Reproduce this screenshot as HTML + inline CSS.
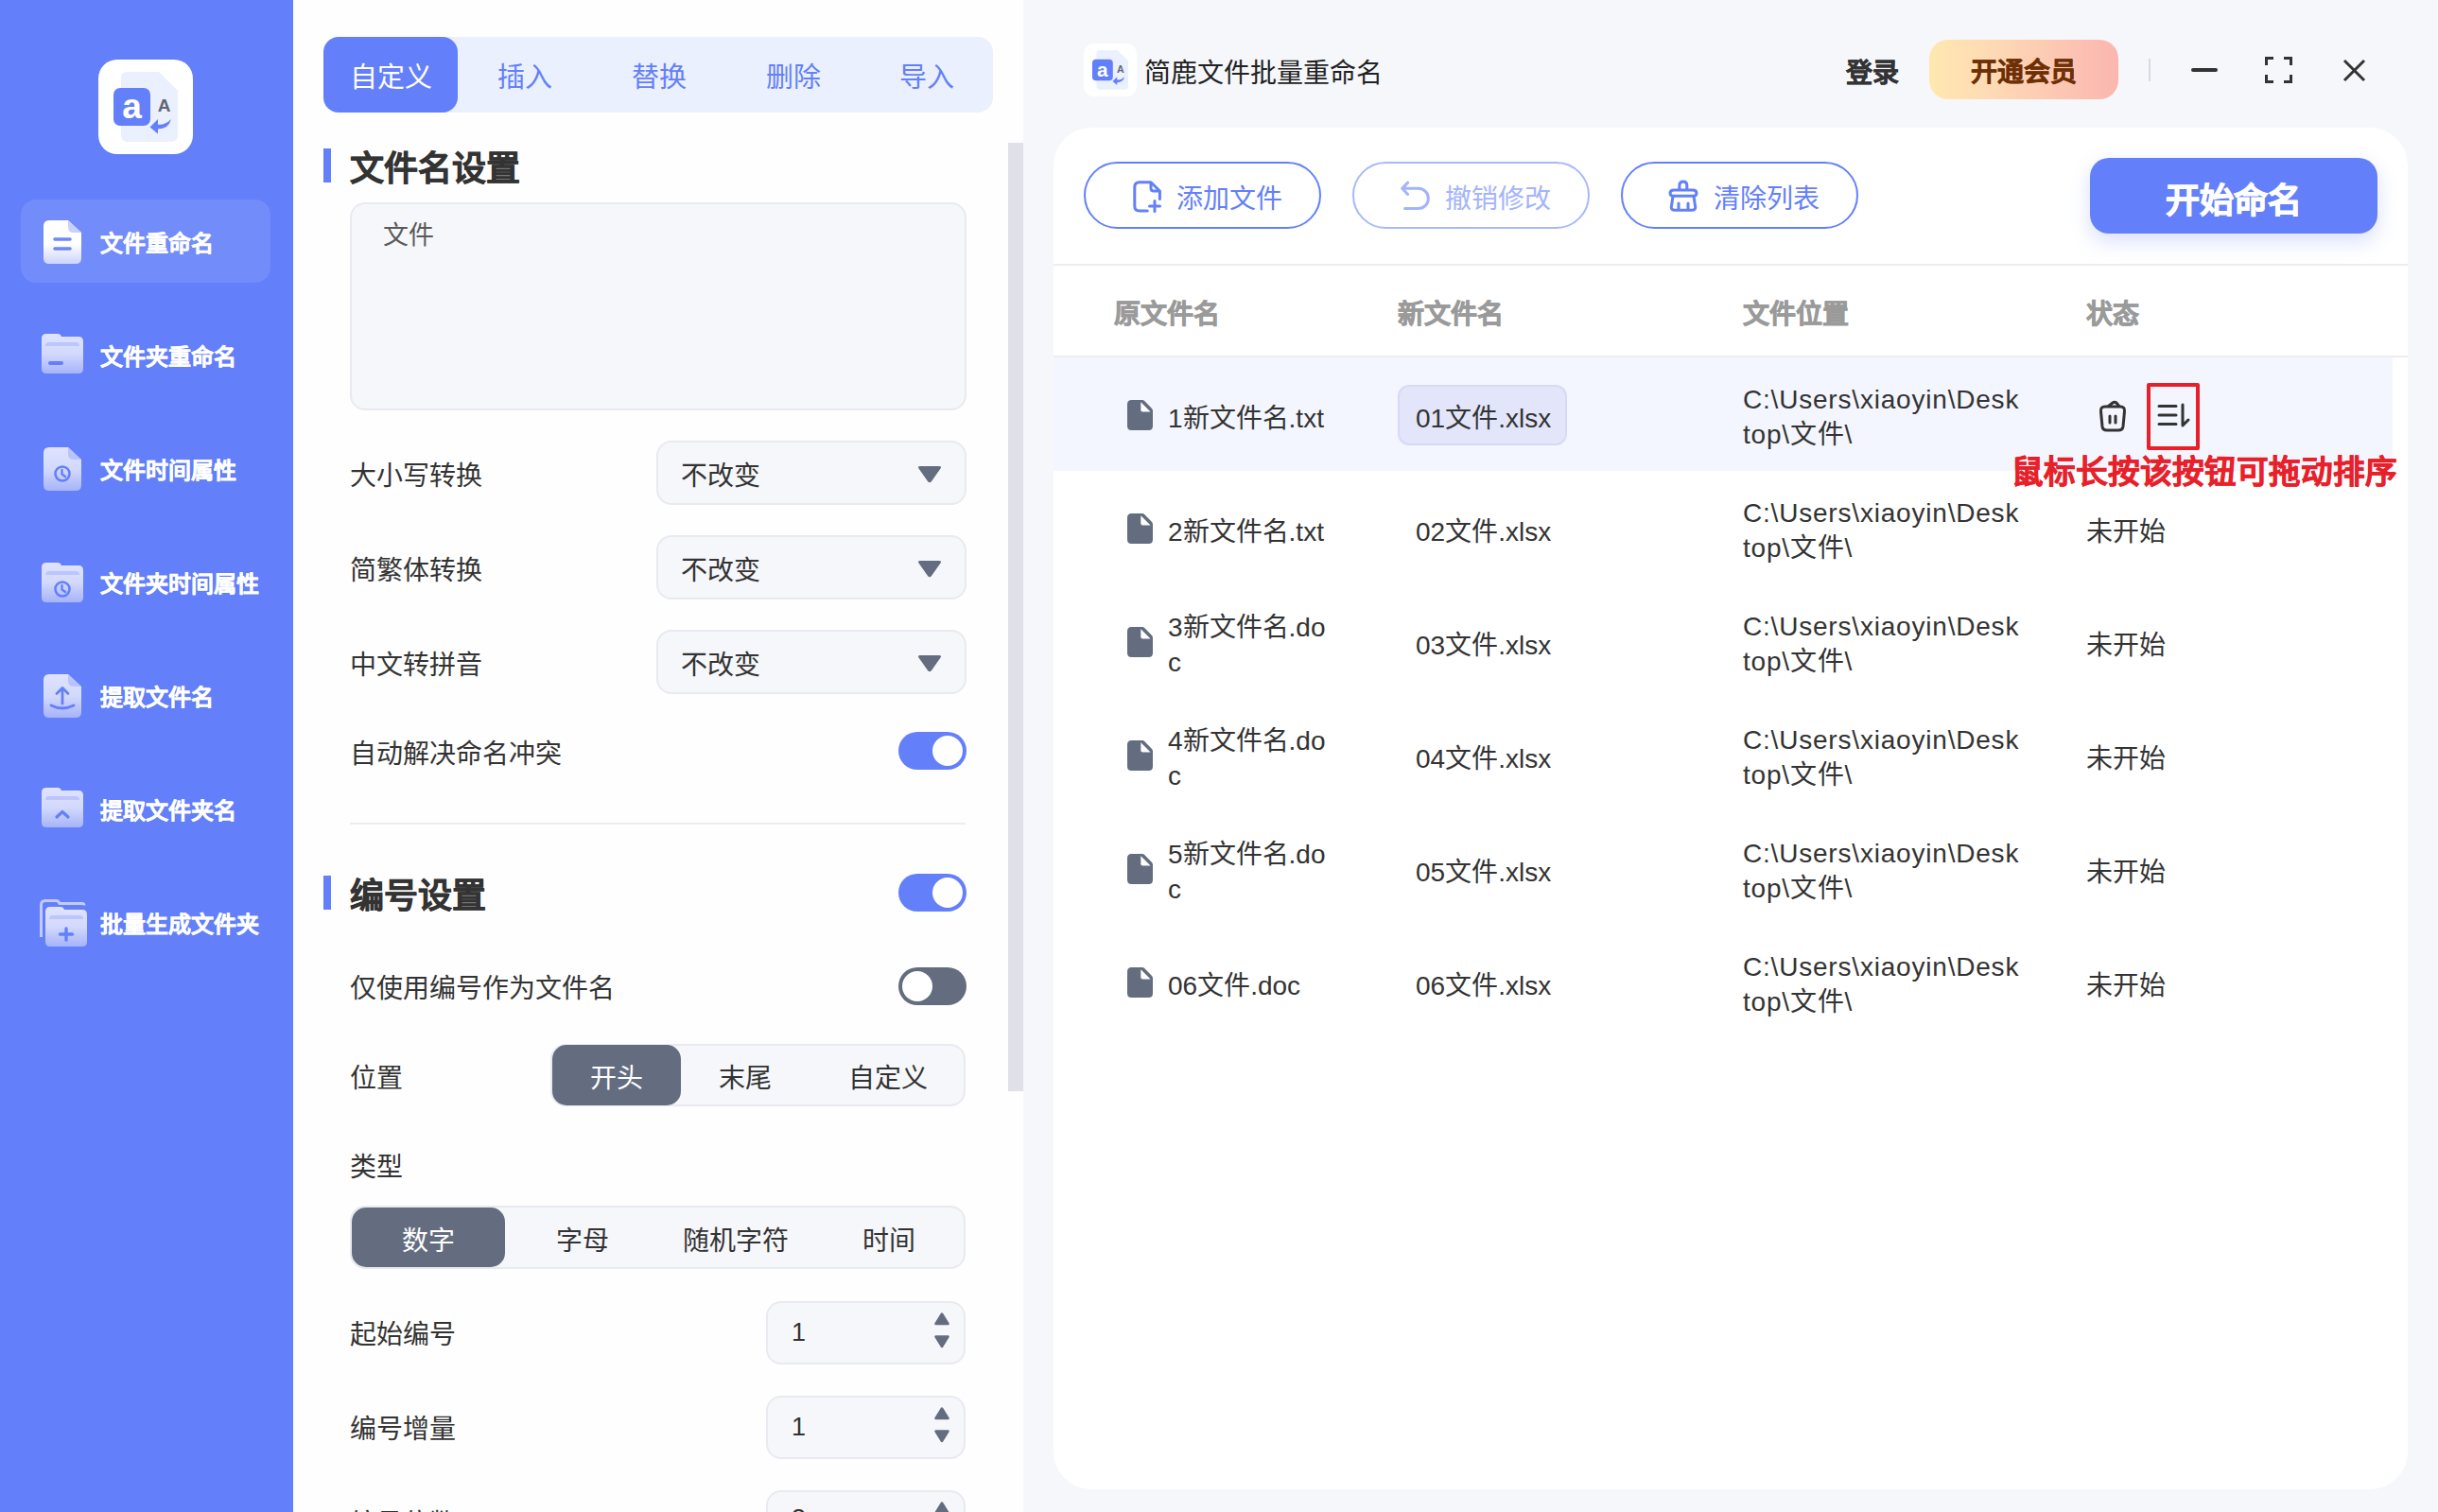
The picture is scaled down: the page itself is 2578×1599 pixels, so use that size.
<!DOCTYPE html>
<html lang="zh-CN"><head><meta charset="utf-8">
<style>
*{box-sizing:border-box;margin:0;padding:0}
html,body{width:2578px;height:1599px;overflow:hidden;background:#f5f6fa;font-family:"Liberation Sans",sans-serif;color:#333}
.a{position:absolute}
#side{left:0;top:0;width:310px;height:1599px;background:#637ffa}
#mid{left:310px;top:0;width:772px;height:1599px;background:#fefefe}
#right{left:1082px;top:0;width:1496px;height:1599px;background:#f6f7fb}
.t{white-space:nowrap;line-height:1;transform:translateY(3px)}
.t2{transform:translateY(1px)}
.tab{font-size:29px;color:#6380fa;text-align:center;line-height:30px}
.h2{font-size:36px;font-weight:bold;color:#333;line-height:36px;-webkit-text-stroke:0.6px #333}
.lab{font-size:28px;color:#333;line-height:30px}
.box{background:#f6f7fb;border:2px solid #e8eaf0;border-radius:16px}
.tog{width:72px;height:40px;border-radius:20px}
.tog.on{background:#6380fa}
.tog.on::after{content:"";position:absolute;right:4px;top:4px;width:32px;height:32px;border-radius:50%;background:#fff}
.tog.off{background:#646d7f}
.tog.off::after{content:"";position:absolute;left:4px;top:4px;width:32px;height:32px;border-radius:50%;background:#fff}
.btn{border:2px solid #6380fa;border-radius:36px}
.btxt{font-size:28px;color:#6380fa;line-height:30px}
.th{font-size:28px;font-weight:bold;color:#9a9a9a;line-height:30px;-webkit-text-stroke:0.7px #9a9a9a}
.td{font-size:28px;color:#333;line-height:37px}
.path{letter-spacing:0.8px}
.bs{-webkit-text-stroke:0.8px currentColor}
.sl{font-size:24px;font-weight:bold;color:#fff;line-height:26px;-webkit-text-stroke:0.35px #fff}

</style></head><body>

<div id="side" class="a">
 <div class="a" style="left:104px;top:63px;width:100px;height:100px;background:#fff;border-radius:20px"></div>
 <svg class="a" style="left:104px;top:63px" width="100" height="100" viewBox="0 0 100 100">
  <path d="M30 13 H64 L84 33 V80 Q84 87 77 87 H31 Q24 87 24 80 V19 Q24 13 30 13 Z" fill="#eaf0fe"/>
  <rect x="16" y="30" width="39" height="40" rx="7" fill="#6380fa"/>
  <text x="35.5" y="62" font-family="Liberation Sans" font-weight="bold" font-size="37" fill="#fff" text-anchor="middle">a</text>
  <text x="69.5" y="54.5" font-family="Liberation Sans" font-weight="bold" font-size="19" fill="#5f6675" text-anchor="middle">A</text>
  <path d="M77 63 Q74 74 62 73.5 L62 68.5 Q70 70 77 63 Z" fill="#6380fa"/>
  <path d="M54.5 71.5 L63 63 L63 78.5 Z" fill="#6380fa"/>
 </svg>
 <div class="a" style="left:22px;top:211px;width:264px;height:88px;background:rgba(255,255,255,0.1);border-radius:16px"></div>
<svg width="0" height="0" style="position:absolute"><defs>
<linearGradient id="gw" x1="0" y1="0" x2="0" y2="1"><stop offset="0" stop-color="#ffffff"/><stop offset="0.55" stop-color="#ffffff"/><stop offset="1" stop-color="#cdd3fb"/></linearGradient>
<linearGradient id="gl" x1="0" y1="0" x2="0" y2="1"><stop offset="0" stop-color="#dfe3fe"/><stop offset="0.5" stop-color="#d3d9fd"/><stop offset="1" stop-color="#a6b3fa"/></linearGradient>
</defs></svg><svg class="a" style="left:46px;top:233px" width="40" height="46" viewBox="0 0 40 46">
<path d="M6 0 H26 L40 13 V40 Q40 46 34 46 H6 Q0 46 0 40 V6 Q0 0 6 0 Z" fill="url(#gw)"/>
<path d="M26 0 L40 13 H32 Q26 13 26 7 Z" fill="#c9d0fc"/><path d="M12 20 H28 M12 30 H28" stroke="#6d88fb" stroke-width="3.6" stroke-linecap="round"/></svg><div class="a t sl" style="left:106px;top:242px">文件重命名</div>
<svg class="a" style="left:44px;top:353px" width="44" height="42" viewBox="0 0 44 42">
<path d="M5 0 H17 Q20 0 21 3 H39 Q44 3 44 8 V37 Q44 42 39 42 H5 Q0 42 0 37 V5 Q0 0 5 0 Z" fill="url(#gl)"/>
<path d="M4 13 Q4 9 8 9 H36 Q40 9 40 13 Z" fill="#bcc5fc"/><path d="M9 31 H21" stroke="#6380fa" stroke-width="4" stroke-linecap="round"/></svg><div class="a t sl" style="left:106px;top:362px">文件夹重命名</div>
<svg class="a" style="left:46px;top:473px" width="40" height="46" viewBox="0 0 40 46">
<path d="M6 0 H26 L40 13 V40 Q40 46 34 46 H6 Q0 46 0 40 V6 Q0 0 6 0 Z" fill="url(#gl)"/>
<path d="M26 0 L40 13 H32 Q26 13 26 7 Z" fill="#b9c3fc"/><circle cx="20" cy="28" r="7.5" fill="none" stroke="#6380fa" stroke-width="2.6"/><path d="M19.5 24 V28.5 L23 31" stroke="#6380fa" stroke-width="2.4" fill="none" stroke-linecap="round"/></svg><div class="a t sl" style="left:106px;top:482px">文件时间属性</div>
<svg class="a" style="left:44px;top:595px" width="44" height="42" viewBox="0 0 44 42">
<path d="M5 0 H17 Q20 0 21 3 H39 Q44 3 44 8 V37 Q44 42 39 42 H5 Q0 42 0 37 V5 Q0 0 5 0 Z" fill="url(#gl)"/>
<path d="M4 13 Q4 9 8 9 H36 Q40 9 40 13 Z" fill="#bcc5fc"/><circle cx="22" cy="28" r="7.5" fill="none" stroke="#6380fa" stroke-width="2.6"/><path d="M21.5 24 V28.5 L25 31" stroke="#6380fa" stroke-width="2.4" fill="none" stroke-linecap="round"/></svg><div class="a t sl" style="left:106px;top:602px">文件夹时间属性</div>
<svg class="a" style="left:46px;top:713px" width="40" height="46" viewBox="0 0 40 46">
<path d="M6 0 H26 L40 13 V40 Q40 46 34 46 H6 Q0 46 0 40 V6 Q0 0 6 0 Z" fill="url(#gl)"/>
<path d="M26 0 L40 13 H32 Q26 13 26 7 Z" fill="#b9c3fc"/><path d="M20 31 V15 M14 20.5 L20 14.5 L26 20.5" stroke="#6380fa" stroke-width="2.8" fill="none" stroke-linecap="round" stroke-linejoin="round"/><path d="M8 33 Q20 39 32 33" stroke="#6380fa" stroke-width="2.8" fill="none" stroke-linecap="round"/></svg><div class="a t sl" style="left:106px;top:722px">提取文件名</div>
<svg class="a" style="left:44px;top:833px" width="44" height="42" viewBox="0 0 44 42">
<path d="M5 0 H17 Q20 0 21 3 H39 Q44 3 44 8 V37 Q44 42 39 42 H5 Q0 42 0 37 V5 Q0 0 5 0 Z" fill="url(#gl)"/>
<path d="M4 13 Q4 9 8 9 H36 Q40 9 40 13 Z" fill="#bcc5fc"/><path d="M16 31 L22 25.5 L28 31" stroke="#6380fa" stroke-width="3.2" fill="none" stroke-linecap="round" stroke-linejoin="round"/></svg><div class="a t sl" style="left:106px;top:842px">提取文件夹名</div>
<svg class="a" style="left:42px;top:951px" width="52" height="52" viewBox="0 0 52 52">
<path d="M1.5 40 V6 Q1.5 1.5 6 1.5 H17 Q20 1.5 21 4.5 H45 Q47 4.5 47 6.5" stroke="#c3cbfd" stroke-width="3" fill="none"/>
<path d="M11 8 H22 Q25 8 26 11 H45 Q50 11 50 16 V45 Q50 50 45 50 H11 Q6 50 6 45 V13 Q6 8 11 8 Z" fill="url(#gl)"/>
<path d="M10 21 Q10 17 14 17 H42 Q46 17 46 21 Z" fill="#bcc5fc"/>
<path d="M28 31 V43 M21.5 37 H34.5" stroke="#6380fa" stroke-width="3.4" stroke-linecap="round"/>
</svg>
<div class="a t sl" style="left:106px;top:962px">批量生成文件夹</div>
</div>


<div id="mid" class="a">
 <div class="a" style="left:32px;top:39px;width:708px;height:80px;background:#ebf0fe;border-radius:16px"></div>
 <div class="a" style="left:32px;top:39px;width:142px;height:80px;background:#6380fa;border-radius:16px"></div>
 <div class="a t tab" style="left:32px;top:64px;width:142px;color:#fff">自定义</div>
 <div class="a t tab" style="left:174px;top:64px;width:142px">插入</div>
 <div class="a t tab" style="left:316px;top:64px;width:142px">替换</div>
 <div class="a t tab" style="left:458px;top:64px;width:142px">删除</div>
 <div class="a t tab" style="left:600px;top:64px;width:140px">导入</div>

 <div class="a" style="left:32px;top:157px;width:8px;height:36px;background:#6380fa"></div>
 <div class="a t h2" style="left:60px;top:158px">文件名设置</div>
 <div class="a box" style="left:60px;top:214px;width:652px;height:220px"></div>
 <div class="a t" style="left:95px;top:233px;font-family:'Liberation Serif',serif;font-size:27px;color:#5a5a5a">文件</div>

 <div class="a t lab" style="left:60px;top:486px">大小写转换</div>
 <div class="a box" style="left:384px;top:466px;width:328px;height:68px"></div>
 <div class="a t lab" style="left:410px;top:486px">不改变</div>
 <svg class="a tri" style="left:660px;top:491px" width="26" height="20" viewBox="0 0 26 20"><path d="M3 2 H23 Q26 2 24.5 4.5 L15 18 Q13 20.5 11 18 L1.5 4.5 Q0 2 3 2 Z" fill="#646d7f"/></svg>

 <div class="a t lab" style="left:60px;top:586px">简繁体转换</div>
 <div class="a box" style="left:384px;top:566px;width:328px;height:68px"></div>
 <div class="a t lab" style="left:410px;top:586px">不改变</div>
 <svg class="a tri" style="left:660px;top:591px" width="26" height="20" viewBox="0 0 26 20"><path d="M3 2 H23 Q26 2 24.5 4.5 L15 18 Q13 20.5 11 18 L1.5 4.5 Q0 2 3 2 Z" fill="#646d7f"/></svg>

 <div class="a t lab" style="left:60px;top:686px">中文转拼音</div>
 <div class="a box" style="left:384px;top:666px;width:328px;height:68px"></div>
 <div class="a t lab" style="left:410px;top:686px">不改变</div>
 <svg class="a tri" style="left:660px;top:691px" width="26" height="20" viewBox="0 0 26 20"><path d="M3 2 H23 Q26 2 24.5 4.5 L15 18 Q13 20.5 11 18 L1.5 4.5 Q0 2 3 2 Z" fill="#646d7f"/></svg>

 <div class="a t lab" style="left:60px;top:780px">自动解决命名冲突</div>
 <div class="a tog on" style="left:640px;top:774px"></div>
 <div class="a" style="left:60px;top:870px;width:651px;height:2px;background:#ededf0"></div>

 <div class="a" style="left:32px;top:926px;width:8px;height:36px;background:#6380fa"></div>
 <div class="a t h2" style="left:60px;top:927px">编号设置</div>
 <div class="a tog on" style="left:640px;top:924px"></div>

 <div class="a t lab" style="left:60px;top:1028px">仅使用编号作为文件名</div>
 <div class="a tog off" style="left:640px;top:1023px"></div>

 <div class="a t lab" style="left:60px;top:1123px">位置</div>
 <div class="a box" style="left:272px;top:1104px;width:439px;height:66px"></div>
 <div class="a" style="left:274px;top:1105px;width:136px;height:64px;background:#646d7f;border-radius:15px"></div>
 <div class="a t lab" style="left:274px;top:1123px;width:136px;text-align:center;color:#fff">开头</div>
 <div class="a t lab" style="left:410px;top:1123px;width:136px;text-align:center">末尾</div>
 <div class="a t lab" style="left:546px;top:1123px;width:165px;text-align:center">自定义</div>

 <div class="a t lab" style="left:60px;top:1217px">类型</div>
 <div class="a box" style="left:60px;top:1275px;width:651px;height:67px"></div>
 <div class="a" style="left:62px;top:1277px;width:162px;height:63px;background:#646d7f;border-radius:15px"></div>
 <div class="a t lab" style="left:62px;top:1295px;width:162px;text-align:center;color:#fff">数字</div>
 <div class="a t lab" style="left:225px;top:1295px;width:162px;text-align:center">字母</div>
 <div class="a t lab" style="left:387px;top:1295px;width:162px;text-align:center">随机字符</div>
 <div class="a t lab" style="left:549px;top:1295px;width:162px;text-align:center">时间</div>

 <div class="a t lab" style="left:60px;top:1394px">起始编号</div>
 <div class="a box" style="left:500px;top:1376px;width:211px;height:67px"></div>
 <div class="a t lab" style="left:527px;top:1391px;font-size:27px">1</div>
 <svg class="a" style="left:678px;top:1388px" width="16" height="38" viewBox="0 0 16 38"><path d="M8 1.5 L14.5 12 H1.5 Z M1.5 25.5 H14.5 L8 36 Z" fill="#646d7f" stroke="#646d7f" stroke-width="2.5" stroke-linejoin="round"/></svg>

 <div class="a t lab" style="left:60px;top:1494px">编号增量</div>
 <div class="a box" style="left:500px;top:1476px;width:211px;height:67px"></div>
 <div class="a t lab" style="left:527px;top:1491px;font-size:27px">1</div>
 <svg class="a" style="left:678px;top:1488px" width="16" height="38" viewBox="0 0 16 38"><path d="M8 1.5 L14.5 12 H1.5 Z M1.5 25.5 H14.5 L8 36 Z" fill="#646d7f" stroke="#646d7f" stroke-width="2.5" stroke-linejoin="round"/></svg>

 <div class="a t lab" style="left:60px;top:1594px">编号位数</div>
 <div class="a box" style="left:500px;top:1576px;width:211px;height:67px"></div>
 <div class="a t lab" style="left:527px;top:1588px;font-size:27px">3</div>
 <svg class="a" style="left:678px;top:1588px" width="16" height="38" viewBox="0 0 16 38"><path d="M8 1.5 L14.5 12 H1.5 Z M1.5 25.5 H14.5 L8 36 Z" fill="#646d7f" stroke="#646d7f" stroke-width="2.5" stroke-linejoin="round"/></svg>

 <div class="a" style="left:756px;top:151px;width:16px;height:1003px;background:#e0e0e8"></div>
</div>


<div id="right" class="a">
 <div class="a" style="left:64px;top:46px;width:56px;height:56px;background:#fff;border-radius:11px"></div>
 <svg class="a" style="left:64px;top:46px" width="56" height="56" viewBox="0 0 100 100">
  <path d="M30 13 H64 L84 33 V80 Q84 87 77 87 H31 Q24 87 24 80 V19 Q24 13 30 13 Z" fill="#eaf0fe"/>
  <rect x="16" y="30" width="39" height="40" rx="7" fill="#6380fa"/>
  <text x="35.5" y="62" font-family="Liberation Sans" font-weight="bold" font-size="37" fill="#fff" text-anchor="middle">a</text>
  <text x="69.5" y="54.5" font-family="Liberation Sans" font-weight="bold" font-size="19" fill="#5f6675" text-anchor="middle">A</text>
  <path d="M77 63 Q74 74 62 73.5 L62 68.5 Q70 70 77 63 Z" fill="#6380fa"/>
  <path d="M54.5 71.5 L63 63 L63 78.5 Z" fill="#6380fa"/>
 </svg>
 <div class="a t" style="left:128px;top:60px;font-size:28px;color:#222;line-height:30px">简鹿文件批量重命名</div>
 <div class="a t" style="left:870px;top:60px;font-size:28px;font-weight:bold;color:#333;line-height:30px;-webkit-text-stroke:0.4px #333">登录</div>
 <div class="a" style="left:958px;top:42px;width:200px;height:63px;border-radius:20px;background:linear-gradient(90deg,#ffe8b0 0%,#fed9b5 35%,#fbb6b0 100%)"></div>
 <div class="a t" style="left:958px;top:59px;width:200px;text-align:center;font-size:28px;font-weight:bold;color:#6e2f05;line-height:30px;-webkit-text-stroke:0.4px #6e2f05">开通会员</div>
 <div class="a" style="left:1190px;top:62px;width:2px;height:24px;background:#d8dae0"></div>
 <div class="a" style="left:1235px;top:72px;width:28px;height:4px;background:#333;border-radius:2px"></div>
 <svg class="a" style="left:1313px;top:60px" width="29" height="28" viewBox="0 0 29 28"><path d="M1.5 9 V1.5 H9 M20 1.5 H27.5 V9 M27.5 19 V26.5 H20 M9 26.5 H1.5 V19" stroke="#333" stroke-width="3" fill="none"/></svg>
 <svg class="a" style="left:1395px;top:62px" width="25" height="25" viewBox="0 0 25 25"><path d="M2 2 L23 23 M23 2 L2 23" stroke="#333" stroke-width="3"/></svg>

 <div class="a" style="left:32px;top:135px;width:1432px;height:1440px;background:#fff;border-radius:40px"></div>
 <div class="a btn" style="left:64px;top:171px;width:251px;height:71px"></div>
 <svg class="a" style="left:116px;top:191px" width="32" height="36" viewBox="0 0 32 36"><path d="M15.3 32 H7 Q1.8 32 1.8 27 V6.7 Q1.8 1.7 6.8 1.7 H19 L28.4 11 V19.6" stroke="#6380fa" stroke-width="3" fill="none" stroke-linecap="round" stroke-linejoin="round"/><path d="M19 2 V8 Q19 11 22 11 H28.4" stroke="#6380fa" stroke-width="3" fill="none" stroke-linejoin="round"/><path d="M23 21.5 V32.5 M17.5 27 H28.5" stroke="#6380fa" stroke-width="3" stroke-linecap="round"/></svg>
 <div class="a t btxt" style="left:162px;top:193px">添加文件</div>
 <div class="a btn" style="left:348px;top:171px;width:251px;height:71px;border-color:#a8b8fc"></div>
 <svg class="a" style="left:398px;top:191px" width="34" height="34" viewBox="0 0 34 34"><path d="M8.6 2.1 L2.7 8.3 L8.6 14.5 M3 8.3 H19.8 A10.6 10.6 0 0 1 19.8 29.5 H5.6" stroke="#a3b4fc" stroke-width="3" fill="none" stroke-linecap="round" stroke-linejoin="round"/></svg>
 <div class="a t btxt" style="left:446px;top:193px;color:#a3b4fc">撤销修改</div>
 <div class="a btn" style="left:632px;top:171px;width:251px;height:71px"></div>
 <svg class="a" style="left:680px;top:190px" width="36" height="36" viewBox="0 0 36 36"><g stroke="#6380fa" stroke-width="3" fill="none" stroke-linecap="round" stroke-linejoin="round"><path d="M13.9 10 V6 Q13.9 2 17.85 2 Q21.8 2 21.8 6 V10"/><path d="M8 11 H28 Q32 11 32 14.2 Q32 17.3 28 17.3 H8 Q4 17.3 4 14.2 Q4 11 8 11 Z"/><path d="M7 17.5 L5.3 29 Q5 32.2 9 32.2 H27 Q31 32.2 30.7 29 L29 17.5"/><path d="M13 25 V31.5 M23 25 V31.5"/></g></svg>
 <div class="a t btxt" style="left:730px;top:193px">清除列表</div>
 <div class="a" style="left:1128px;top:167px;width:304px;height:80px;background:#6380fa;border-radius:20px;box-shadow:0 8px 20px rgba(99,128,250,0.25)"></div>
 <div class="a t" style="left:1128px;top:192px;width:304px;text-align:center;font-size:36px;font-weight:bold;color:#fff;line-height:36px;-webkit-text-stroke:1px #fff">开始命名</div>
 <div class="a" style="left:32px;top:279px;width:1432px;height:2px;background:#ededf0"></div>

 <div class="a t th" style="left:96px;top:315px">原文件名</div>
 <div class="a t th" style="left:396px;top:315px">新文件名</div>
 <div class="a t th" style="left:761px;top:315px">文件位置</div>
 <div class="a t th" style="left:1124px;top:315px">状态</div>
 <div class="a" style="left:32px;top:376px;width:1432px;height:2px;background:#ededf0"></div>
 <div class="a" style="left:32px;top:378px;width:1416px;height:120px;background:#f3f6fe"></div>
<svg class="a" style="left:110px;top:423px" width="27" height="32" viewBox="0 0 27 32"><path d="M4.5 0 H16 Q17.2 0 18.2 1 L26 9 Q27 10 27 11.5 V27.5 Q27 32 22.5 32 H4.5 Q0 32 0 27.5 V4.5 Q0 0 4.5 0 Z" fill="#646d7f"/><path d="M14.3 2.3 L24.6 12.6 H16.3 Q14.3 12.6 14.3 10.6 Z" fill="#fff"/></svg> <div class="a t td" style="left:153px;top:421px">1新文件名.txt</div>
 <div class="a" style="left:396px;top:407px;width:179px;height:64px;background:#e3e6fa;border:2px solid #d6daf4;border-radius:12px"></div>
 <div class="a t td" style="left:415px;top:421px">01文件.xlsx</div>
 <div class="a t td t2 path" style="left:761px;top:403px">C:\Users\xiaoyin\Desk<br>top\文件\</div>
<svg class="a" style="left:110px;top:543px" width="27" height="32" viewBox="0 0 27 32"><path d="M4.5 0 H16 Q17.2 0 18.2 1 L26 9 Q27 10 27 11.5 V27.5 Q27 32 22.5 32 H4.5 Q0 32 0 27.5 V4.5 Q0 0 4.5 0 Z" fill="#646d7f"/><path d="M14.3 2.3 L24.6 12.6 H16.3 Q14.3 12.6 14.3 10.6 Z" fill="#fff"/></svg> <div class="a t td" style="left:153px;top:541px">2新文件名.txt</div>
 <div class="a t td" style="left:415px;top:541px">02文件.xlsx</div>
 <div class="a t td t2 path" style="left:761px;top:523px">C:\Users\xiaoyin\Desk<br>top\文件\</div>
 <div class="a t td" style="left:1124px;top:541px">未开始</div>
<svg class="a" style="left:110px;top:663px" width="27" height="32" viewBox="0 0 27 32"><path d="M4.5 0 H16 Q17.2 0 18.2 1 L26 9 Q27 10 27 11.5 V27.5 Q27 32 22.5 32 H4.5 Q0 32 0 27.5 V4.5 Q0 0 4.5 0 Z" fill="#646d7f"/><path d="M14.3 2.3 L24.6 12.6 H16.3 Q14.3 12.6 14.3 10.6 Z" fill="#fff"/></svg> <div class="a t td t2" style="left:153px;top:644px">3新文件名.do<br>c</div>
 <div class="a t td" style="left:415px;top:661px">03文件.xlsx</div>
 <div class="a t td t2 path" style="left:761px;top:643px">C:\Users\xiaoyin\Desk<br>top\文件\</div>
 <div class="a t td" style="left:1124px;top:661px">未开始</div>
<svg class="a" style="left:110px;top:783px" width="27" height="32" viewBox="0 0 27 32"><path d="M4.5 0 H16 Q17.2 0 18.2 1 L26 9 Q27 10 27 11.5 V27.5 Q27 32 22.5 32 H4.5 Q0 32 0 27.5 V4.5 Q0 0 4.5 0 Z" fill="#646d7f"/><path d="M14.3 2.3 L24.6 12.6 H16.3 Q14.3 12.6 14.3 10.6 Z" fill="#fff"/></svg> <div class="a t td t2" style="left:153px;top:764px">4新文件名.do<br>c</div>
 <div class="a t td" style="left:415px;top:781px">04文件.xlsx</div>
 <div class="a t td t2 path" style="left:761px;top:763px">C:\Users\xiaoyin\Desk<br>top\文件\</div>
 <div class="a t td" style="left:1124px;top:781px">未开始</div>
<svg class="a" style="left:110px;top:903px" width="27" height="32" viewBox="0 0 27 32"><path d="M4.5 0 H16 Q17.2 0 18.2 1 L26 9 Q27 10 27 11.5 V27.5 Q27 32 22.5 32 H4.5 Q0 32 0 27.5 V4.5 Q0 0 4.5 0 Z" fill="#646d7f"/><path d="M14.3 2.3 L24.6 12.6 H16.3 Q14.3 12.6 14.3 10.6 Z" fill="#fff"/></svg> <div class="a t td t2" style="left:153px;top:884px">5新文件名.do<br>c</div>
 <div class="a t td" style="left:415px;top:901px">05文件.xlsx</div>
 <div class="a t td t2 path" style="left:761px;top:883px">C:\Users\xiaoyin\Desk<br>top\文件\</div>
 <div class="a t td" style="left:1124px;top:901px">未开始</div>
<svg class="a" style="left:110px;top:1023px" width="27" height="32" viewBox="0 0 27 32"><path d="M4.5 0 H16 Q17.2 0 18.2 1 L26 9 Q27 10 27 11.5 V27.5 Q27 32 22.5 32 H4.5 Q0 32 0 27.5 V4.5 Q0 0 4.5 0 Z" fill="#646d7f"/><path d="M14.3 2.3 L24.6 12.6 H16.3 Q14.3 12.6 14.3 10.6 Z" fill="#fff"/></svg> <div class="a t td" style="left:153px;top:1021px">06文件.doc</div>
 <div class="a t td" style="left:415px;top:1021px">06文件.xlsx</div>
 <div class="a t td t2 path" style="left:761px;top:1003px">C:\Users\xiaoyin\Desk<br>top\文件\</div>
 <div class="a t td" style="left:1124px;top:1021px">未开始</div>
 <svg class="a" style="left:1137px;top:423px" width="30" height="34" viewBox="0 0 30 34"><path d="M10 7 L15 3 Q17 1.5 19 3 L22 7" stroke="#333" stroke-width="3" fill="none" stroke-linejoin="round"/><path d="M7 7 H23 Q28 7 27.5 12 L26 28 Q25.5 32 21 32 H9 Q4.5 32 4 28 L2.5 12 Q2 7 7 7 Z" stroke="#333" stroke-width="3" fill="none"/><path d="M12 17 V24 M18 17 V24" stroke="#333" stroke-width="3" stroke-linecap="round"/></svg>
 <div class="a" style="left:1188px;top:405px;width:56px;height:71px;border:4px solid #e8202a;border-radius:2px"></div>
 <svg class="a" style="left:1199px;top:425px" width="36" height="28" viewBox="0 0 36 28"><path d="M2 4.5 H20 M2 14 H20 M2 23.5 H20" stroke="#333" stroke-width="3" stroke-linecap="round"/><path d="M27 3 V25 L33 19" stroke="#333" stroke-width="3" fill="none" stroke-linecap="round" stroke-linejoin="round"/></svg>
 <div class="a t" style="left:1045px;top:480px;font-size:33.6px;font-weight:bold;color:#e8202a;line-height:34px;-webkit-text-stroke:0.6px #e8202a">鼠标长按该按钮可拖动排序</div>
</div>

</body></html>
